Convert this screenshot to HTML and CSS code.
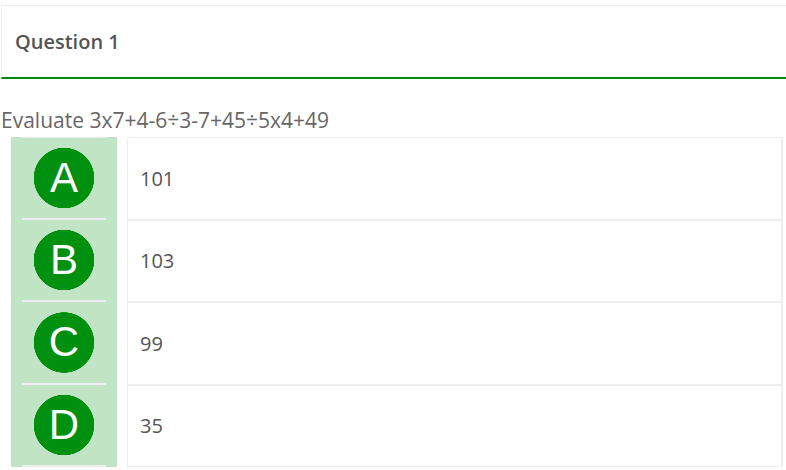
FILE: index.html
```html
<!DOCTYPE html>
<html lang="en">
<head>
    <meta charset="UTF-8">
    <meta name="viewport" content="width=device-width, initial-scale=1.0">
    <title>Question 1</title>
    <link rel="stylesheet" href="styles.css">
</head>
<body>
    <div class="question-header">Question 1</div>

    <p class="question-text">Evaluate 3x7+4-6÷3-7+45÷5x4+49</p>

    <div class="options">
        <div class="option">
            <div class="option-letter"><span class="circle">A</span></div>
            <div class="option-answer">101</div>
        </div>
        <div class="option">
            <div class="option-letter"><span class="circle">B</span></div>
            <div class="option-answer">103</div>
        </div>
        <div class="option">
            <div class="option-letter"><span class="circle">C</span></div>
            <div class="option-answer">99</div>
        </div>
        <div class="option">
            <div class="option-letter"><span class="circle">D</span></div>
            <div class="option-answer">35</div>
        </div>
    </div>
</body>
</html>
```

FILE: styles.css
```css
body {
    margin: 0;
    font-family: "Open Sans", Arial, sans-serif;
    color: #555;
    background-color: #fff;
}

.question-header {
    margin: 5px 0 0 1px;
    height: 71px;
    padding-left: 13px;
    display: flex;
    align-items: center;
    font-size: 20px;
    font-weight: 600;
    color: #555;
    border: 1px solid #eee;
    border-right: none;
    border-bottom: 2px solid #008a0e;
}

.question-text {
    margin: 28px 0 4px 1px;
    font-size: 21px;
    line-height: 26px;
    color: #666;
}

.options {
    margin-left: 11px;
    margin-right: 3px;
    display: flex;
    flex-direction: column;
}

.option {
    display: flex;
    gap: 10px;
}

.option-letter {
    width: 106px;
    padding: 0 11px;
    box-sizing: border-box;
    background-color: #c1e4c5;
    display: flex;
}

.option-letter .circle {
    flex: 1;
    display: flex;
    align-items: center;
    justify-content: center;
    border-bottom: 2px solid #eee;
    font-family: "Liberation Sans", Arial, sans-serif;
    font-size: 42px;
    color: #fff;
    background: radial-gradient(circle at center, #009010 0, #009010 30px, transparent 30.5px);
}

.option:first-child .option-letter .circle {
    border-top: 1px solid #eee;
}

.option-answer {
    flex: 1;
    height: 80.5px;
    padding-left: 12px;
    display: flex;
    align-items: center;
    font-size: 20px;
    color: #555;
    border: 1px solid #eee;
    border-right-width: 2px;
}
```
